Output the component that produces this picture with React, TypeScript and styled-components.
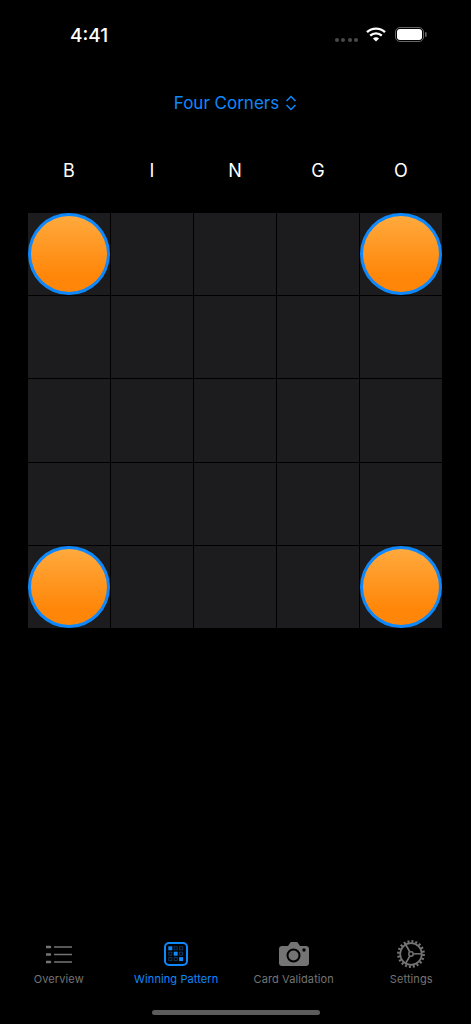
import styled, { createGlobalStyle } from "styled-components";

const BLUE = "#0f88fb";
const LETTERS = ["B", "I", "N", "G", "O"];
const CORNERS = [0, 4, 20, 24];

const GlobalStyle = createGlobalStyle`
  html, body {
    margin: 0;
    padding: 0;
    background: #000;
  }
  body {
    font-family: Inter, "Liberation Sans", sans-serif;
  }
`;

const Screen = styled.div`
  width: 471px;
  height: 1024px;
  display: flex;
  flex-direction: column;
  background: #000;
  overflow: hidden;
`;

const StatusBar = styled.div`
  height: 70px;
  padding: 0 44px 0 70px;
  box-sizing: border-box;
  display: flex;
  justify-content: space-between;
  align-items: flex-start;
`;

const Time = styled.span`
  margin-top: 24px;
  font-size: 19px;
  line-height: 24px;
  font-weight: 500;
  color: #fff;
`;

const StatusIcons = styled.div`
  margin-top: 27px;
  display: flex;
  align-items: flex-start;
  gap: 9px;
`;

const SignalDots = styled.div`
  display: flex;
  gap: 2.5px;
  margin-top: 11px;
  margin-right: -1px;

  i {
    width: 4px;
    height: 4px;
    border-radius: 50%;
    background: #4a4a4a;
  }
`;

const PatternPicker = styled.div`
  height: 66px;
  display: flex;
  justify-content: center;
  align-items: center;
  gap: 6px;
  color: ${BLUE};
  font-size: 17px;
`;

const LetterRow = styled.div`
  margin: 0 29px 0 28px;
  height: 77px;
  display: grid;
  grid-template-columns: repeat(5, 82px);
  column-gap: 1px;
  align-items: center;
  padding-bottom: 8px;
  box-sizing: border-box;
`;

const Letter = styled.span`
  text-align: center;
  font-size: 18px;
  color: #fff;
`;

const Board = styled.div`
  margin-left: 28px;
  width: 414px;
  display: grid;
  grid-template-columns: repeat(5, 82px);
  grid-auto-rows: 82.2px;
  gap: 1px;
`;

const Cell = styled.div`
  background: #1c1c1e;
  position: relative;
`;

const Chip = styled.div`
  position: absolute;
  inset: 0;
  box-sizing: border-box;
  border: 3.5px solid ${BLUE};
  border-radius: 50%;
  background: linear-gradient(180deg, #ffab40 0%, #ff8608 78%);
  background-origin: border-box;
`;

const TabBar = styled.nav`
  margin-top: auto;
  height: 71px;
  padding-right: 1px;
  display: grid;
  grid-template-columns: repeat(4, 1fr);
`;

const Tab = styled.div<{ $active?: boolean }>`
  display: flex;
  flex-direction: column;
  align-items: center;
  color: ${(p) => (p.$active ? BLUE : "#747474")};
`;

const TabIcon = styled.div`
  height: 30px;
  display: flex;
  align-items: center;
  justify-content: center;
`;

const TabLabel = styled.span`
  margin-top: 3px;
  font-size: 11px;
  line-height: 14px;
  font-weight: 400;
  letter-spacing: 0.1px;
  white-space: nowrap;
`;

const HomeBar = styled.div`
  align-self: center;
  width: 168px;
  height: 5px;
  margin-bottom: 9px;
  border-radius: 3px;
  background: #5c5c5c;
`;

const WifiIcon = () => (
  <svg width="20" height="15" viewBox="0 0 20 15" fill="none" stroke="#fff" strokeWidth="2.4">
    <path d="M1 5.2c5-4.8 13-4.8 18 0" />
    <path d="M4.2 8.6c3.2-3 8.4-3 11.6 0" />
    <path d="M10 14.6 6.9 11.4c1.7-1.5 4.5-1.5 6.2 0Z" fill="#fff" stroke="none" />
  </svg>
);

const BatteryIcon = () => (
  <svg width="32" height="15" viewBox="0 0 32 15">
    <rect x="0.5" y="0.5" width="28" height="14" rx="4.5" fill="none" stroke="#666" />
    <rect x="2" y="2" width="25" height="11" rx="3" fill="#fff" />
    <rect x="30" y="5" width="1.6" height="5" rx="0.8" fill="#666" />
  </svg>
);

const Chevrons = () => (
  <svg width="12" height="16" viewBox="0 0 12 16" fill="none" stroke={BLUE} strokeWidth="1.5">
    <path d="M1.5 6 6 1.5 10.5 6" />
    <path d="M1.5 10 6 14.5 10.5 10" />
  </svg>
);

const ListIcon = () => (
  <svg width="26" height="19" viewBox="0 0 26 19" fill="none" stroke="currentColor" strokeWidth="1.7">
    <path d="M8 2h18M8 9.500h18M8 17h18" />
    <path d="M0.500 2h3.500M0.500 9.500h3.500M0.500 17h3.500" strokeWidth="2.600" strokeLinecap="round" />
  </svg>
);

const DiceIcon = () => {
  const spots = [0, 1, 2].flatMap((row) => [0, 1, 2].map((col) => ({ row, col })));
  return (
    <svg width="24" height="24" viewBox="0 0 24 24" fill="none">
      <rect x="1" y="1" width="22" height="22" rx="4" stroke={BLUE} strokeWidth="2" />
      {spots.map(({ row, col }) =>
        row === col ? (
          <rect key={`${row}-${col}`} x={4.3 + col * 5.4} y={4.3 + row * 5.4} width="4" height="4" fill={BLUE} />
        ) : (
          <rect
            key={`${row}-${col}`}
            x={4.8 + col * 5.4}
            y={4.8 + row * 5.4}
            width="3"
            height="3"
            stroke="#0b3560"
            strokeWidth="1"
          />
        ),
      )}
    </svg>
  );
};

const CameraIcon = () => (
  <svg width="30" height="24" viewBox="0 0 30 24">
    <path
      fill="currentColor"
      fillRule="evenodd"
      d="M3 4h6l2-3c.3-.5.8-1 1.500-1h5c.7 0 1.200.5 1.500 1l2 3h6c1.700 0 3 1.300 3 3v14c0 1.700-1.300 3-3 3H3c-1.700 0-3-1.300-3-3V7c0-1.700 1.300-3 3-3Z"
    />
    <circle cx="14.500" cy="13.500" r="6" fill="none" stroke="#000" strokeWidth="2" />
    <circle cx="25" cy="8" r="1.700" fill="#000" />
  </svg>
);

const GearIcon = () => (
  <svg width="28" height="28" viewBox="0 0 28 28" fill="none" stroke="currentColor">
    <circle cx="14" cy="14" r="10.800" strokeWidth="1.700" />
    <circle cx="14" cy="14" r="12.600" strokeWidth="2.600" strokeDasharray="2 1.960" />
    <circle cx="14" cy="14" r="2.200" strokeWidth="1.500" />
    <path d="M16.200 14Q20 13.500 24.500 14M12.900 12.100Q11 8.500 8.700 4.800M12.900 15.900Q11 19.500 8.700 23.200" strokeWidth="1.700" />
  </svg>
);

const TABS = [
  { label: "Overview", icon: <ListIcon /> },
  { label: "Winning Pattern", icon: <DiceIcon />, active: true },
  { label: "Card Validation", icon: <CameraIcon /> },
  { label: "Settings", icon: <GearIcon /> },
];

export default function App() {
  return (
    <Screen>
      <GlobalStyle />
      <StatusBar>
        <Time>4:41</Time>
        <StatusIcons>
          <SignalDots>
            <i />
            <i />
            <i />
            <i />
          </SignalDots>
          <WifiIcon />
          <BatteryIcon />
        </StatusIcons>
      </StatusBar>

      <PatternPicker>
        Four Corners
        <Chevrons />
      </PatternPicker>

      <LetterRow>
        {LETTERS.map((l) => (
          <Letter key={l}>{l}</Letter>
        ))}
      </LetterRow>

      <Board>
        {Array.from({ length: 25 }, (_, i) => (
          <Cell key={i}>{CORNERS.includes(i) && <Chip />}</Cell>
        ))}
      </Board>

      <TabBar>
        {TABS.map((t) => (
          <Tab key={t.label} $active={t.active}>
            <TabIcon>{t.icon}</TabIcon>
            <TabLabel>{t.label}</TabLabel>
          </Tab>
        ))}
      </TabBar>
      <HomeBar />
    </Screen>
  );
}
